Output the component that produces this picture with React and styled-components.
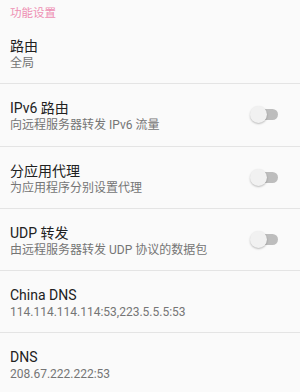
import React from "react";
import styled, { createGlobalStyle } from "styled-components";

const GlobalStyle = createGlobalStyle`
    html, body {
        margin: 0;
        padding: 0;
        background: #fafafa;
    }
    body {
        font-family: Roboto, "Noto Sans CJK SC", sans-serif;
    }
`;

const settings = [
    { title: "路由", summary: "全局" },
    { title: "IPv6 路由", summary: "向远程服务器转发 IPv6 流量", toggle: true },
    { title: "分应用代理", summary: "为应用程序分别设置代理", toggle: true },
    { title: "UDP 转发", summary: "由远程服务器转发 UDP 协议的数据包", toggle: true },
    { title: "China DNS", summary: "114.114.114.114:53,223.5.5.5:53" },
    { title: "DNS", summary: "208.67.222.222:53" },
];

export default function App() {
    return (
        <Page>
            <GlobalStyle />
            <Category>功能设置</Category>
            {settings.map((item, index) => (
                <Row key={index} last={index === settings.length - 1}>
                    <Texts>
                        <Title>{item.title}</Title>
                        <Summary>{item.summary}</Summary>
                    </Texts>
                    {item.toggle ? (
                        <Switch>
                            <Track />
                            <Thumb />
                        </Switch>
                    ) : <></>}
                </Row>
            ))}
        </Page>
    );
}

const Page = styled.div`
    width: 300px;
    height: 392px;
    overflow: hidden;
    background: #fafafa;
`;

const Category = styled.div`
    padding: 5px 10px 0;
    height: 17px;
    line-height: 16px;
    font-size: 11.5px;
    color: #ee8fb3;
`;

const Row = styled.div`
    display: flex;
    align-items: center;
    height: 61.25px;
    padding: 0 22px 0 10px;
    border-bottom: ${props => props.last ? "none" : "1px solid #e4e4e4"};
`;

const Texts = styled.div`
    flex: 1;
    display: flex;
    flex-direction: column;
    padding-top: 3px;
`;

const Title = styled.div`
    font-size: 14px;
    line-height: 18px;
    color: #212121;
`;

const Summary = styled.div`
    font-size: 12px;
    line-height: 16px;
    color: #757575;
`;

const Switch = styled.div`
    position: relative;
    width: 28px;
    height: 17px;
`;

const Track = styled.div`
    position: absolute;
    left: 3px;
    right: 0;
    top: 3px;
    height: 11px;
    border-radius: 6px;
    background: #bdbdbd;
`;

const Thumb = styled.div`
    position: absolute;
    left: 0;
    top: 0;
    width: 17px;
    height: 17px;
    border-radius: 50%;
    background: #f1f1f1;
    box-shadow: 0 1px 2px rgba(0, 0, 0, 0.25);
`;
